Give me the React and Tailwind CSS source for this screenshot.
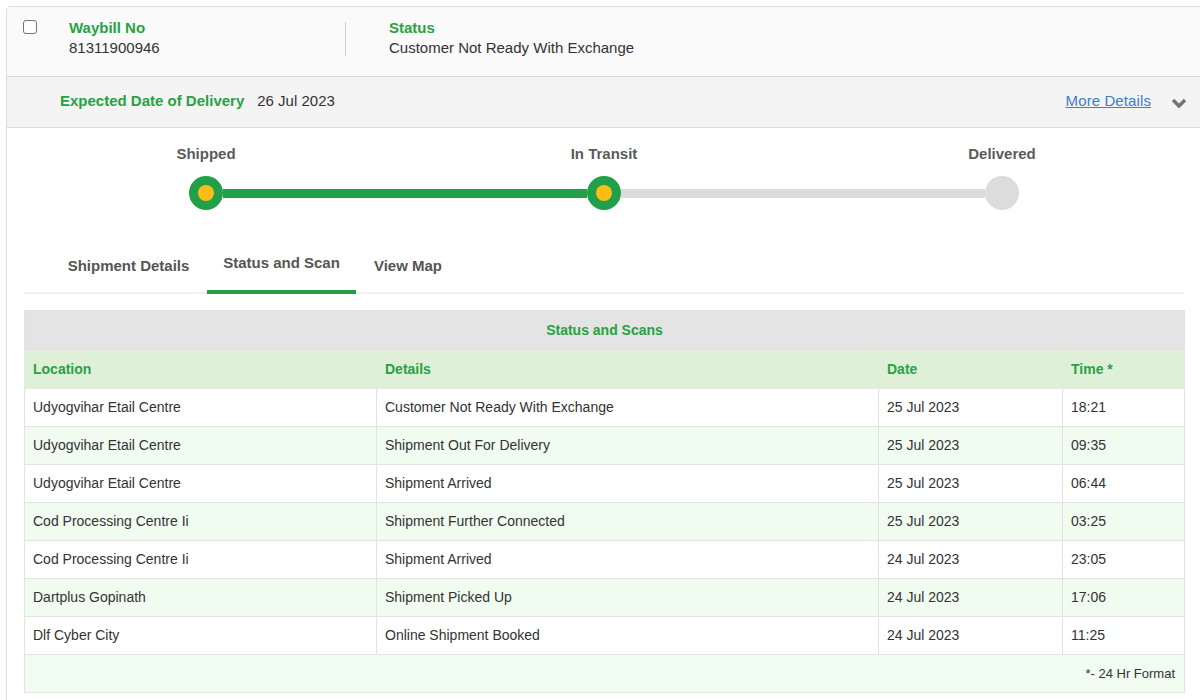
import React from 'react';

const GREEN = 'text-[#27a243]';

const SCANS = [
  { loc: 'Udyogvihar Etail Centre', det: 'Customer Not Ready With Exchange', date: '25 Jul 2023', time: '18:21' },
  { loc: 'Udyogvihar Etail Centre', det: 'Shipment Out For Delivery', date: '25 Jul 2023', time: '09:35' },
  { loc: 'Udyogvihar Etail Centre', det: 'Shipment Arrived', date: '25 Jul 2023', time: '06:44' },
  { loc: 'Cod Processing Centre Ii', det: 'Shipment Further Connected', date: '25 Jul 2023', time: '03:25' },
  { loc: 'Cod Processing Centre Ii', det: 'Shipment Arrived', date: '24 Jul 2023', time: '23:05' },
  { loc: 'Dartplus Gopinath', det: 'Shipment Picked Up', date: '24 Jul 2023', time: '17:06' },
  { loc: 'Dlf Cyber City', det: 'Online Shipment Booked', date: '24 Jul 2023', time: '11:25' },
];

function Step({ label, left, right, done }) {
  const seg = (c) =>
    c === 'none' ? <div className="flex-1" /> : (
      <div className={`flex-1 h-[9px] ${c === 'green' ? 'bg-[#21a049]' : 'bg-[#dcdcdc]'}`} />
    );
  return (
    <div className="flex-1 flex flex-col items-stretch">
      <div className="text-center text-[15px] leading-[20px] font-bold text-[#5a5a5a]">{label}</div>
      <div className="flex items-center mt-[12px]">
        {seg(left)}
        {done ? (
          <div className="h-[34px] w-[34px] rounded-full bg-[#21a049] flex items-center justify-center">
            <div className="h-[16px] w-[16px] rounded-full bg-[#fbbd18]" />
          </div>
        ) : (
          <div className="h-[34px] w-[34px] rounded-full bg-[#dcdcdc]" />
        )}
        {seg(right)}
      </div>
    </div>
  );
}

export default function App() {
  return (
    <div className="w-[1200px] h-[700px] overflow-hidden bg-white" style={{ fontFamily: '"Liberation Sans", Arial, sans-serif' }}>
      <div className="ml-[6px] mt-[6px] w-[1200px] border border-[#dcdcdc] rounded-tl-[4px] text-[#333]">
        {/* Header */}
        <div className="h-[69px] bg-[#fafafa] flex items-start pt-[11px]">
          <div className="w-[62px] pl-[16px] pt-[2px]">
            <div className="h-[14px] w-[14px] rounded-[3px] border border-[#767676] bg-white" />
          </div>
          <div className="w-[276px]">
            <div className={`text-[15px] leading-[20px] font-bold ${GREEN}`}>Waybill No</div>
            <div className="text-[15px] leading-[20px]">81311900946</div>
          </div>
          <div className="w-px h-[34px] bg-[#cfcfcf] mt-[4px]" />
          <div className="pl-[43px]">
            <div className={`text-[15px] leading-[20px] font-bold ${GREEN}`}>Status</div>
            <div className="text-[15px] leading-[20px]">Customer Not Ready With Exchange</div>
          </div>
        </div>

        {/* Expected delivery */}
        <div className="h-[52px] bg-[#f4f4f4] border-t border-b border-[#dcdcdc] flex items-center pb-[2px] pl-[53px] pr-[18px]">
          <span className={`text-[15px] font-bold ${GREEN}`}>Expected Date of Delivery</span>
          <span className="text-[15px] ml-[13px]">26 Jul 2023</span>
          <span className="ml-auto text-[15px] tracking-[0.1px] text-[#3b7fc4] underline">More Details</span>
          <svg className="ml-[20px] mt-[4px]" width="16" height="12" viewBox="0 0 16 12">
            <path d="M2 3 L8 9 L14 3" fill="none" stroke="#757575" strokeWidth="3.4" />
          </svg>
        </div>

        {/* Progress */}
        <div className="flex pt-[16px] w-[1194px]">
          <Step label="Shipped" left="none" right="green" done />
          <Step label="In Transit" left="green" right="grey" done />
          <Step label="Delivered" left="grey" right="none" />
        </div>

        {/* Tabs */}
        <div className="mx-[17px] w-[1160px] mt-[30px] border-b-2 border-[#f0f0f0] flex items-end h-[54px] pl-[26px]">
          <div className="w-[157px] h-full flex items-center justify-center text-[15px] font-bold text-[#555]">Shipment Details</div>
          <div className="w-[149px] h-full flex flex-col">
            <div className="flex-1 flex items-center justify-center pb-[4px] text-[15px] font-bold text-[#555]">Status and Scan</div>
            <div className="h-[4px] bg-[#21a049] mb-[-2px]" />
          </div>
          <div className="w-[104px] h-full flex items-center justify-center text-[15px] font-bold text-[#555]">View Map</div>
        </div>

        {/* Table */}
        <table className="ml-[17px] mt-[16px] w-[1160px] border-collapse text-[14px] table-fixed">
          <colgroup>
            <col className="w-[352px]" />
            <col className="w-[502px]" />
            <col className="w-[184px]" />
            <col className="w-[122px]" />
          </colgroup>
          <thead>
            <tr className="h-[39px] bg-[#e4e4e4]">
              <th colSpan={4} className={`text-center font-bold ${GREEN} border border-[#e2e2e2]`}>Status and Scans</th>
            </tr>
            <tr className="h-[39px] bg-[#dff0d8]">
              {['Location', 'Details', 'Date', 'Time *'].map((h) => (
                <th key={h} className={`text-left font-bold pl-[8px] ${GREEN} border border-[#e2e8e2]`}>{h}</th>
              ))}
            </tr>
          </thead>
          <tbody>
            {SCANS.map((r, i) => (
              <tr key={i} className={`h-[38px] ${i % 2 ? 'bg-[#f1fcf1]' : 'bg-white'}`}>
                <td className="pl-[8px] border border-[#e3e3e3]">{r.loc}</td>
                <td className="pl-[8px] border border-[#e3e3e3]">{r.det}</td>
                <td className="pl-[8px] border border-[#e3e3e3]">{r.date}</td>
                <td className="pl-[8px] border border-[#e3e3e3]">{r.time}</td>
              </tr>
            ))}
            <tr className="h-[38px] bg-[#f1fdf1]">
              <td colSpan={4} className="text-right pr-[9px] text-[13px] border border-[#e3e3e3]">*- 24 Hr Format</td>
            </tr>
          </tbody>
        </table>
        <div className="h-[20px]" />
      </div>
    </div>
  );
}
